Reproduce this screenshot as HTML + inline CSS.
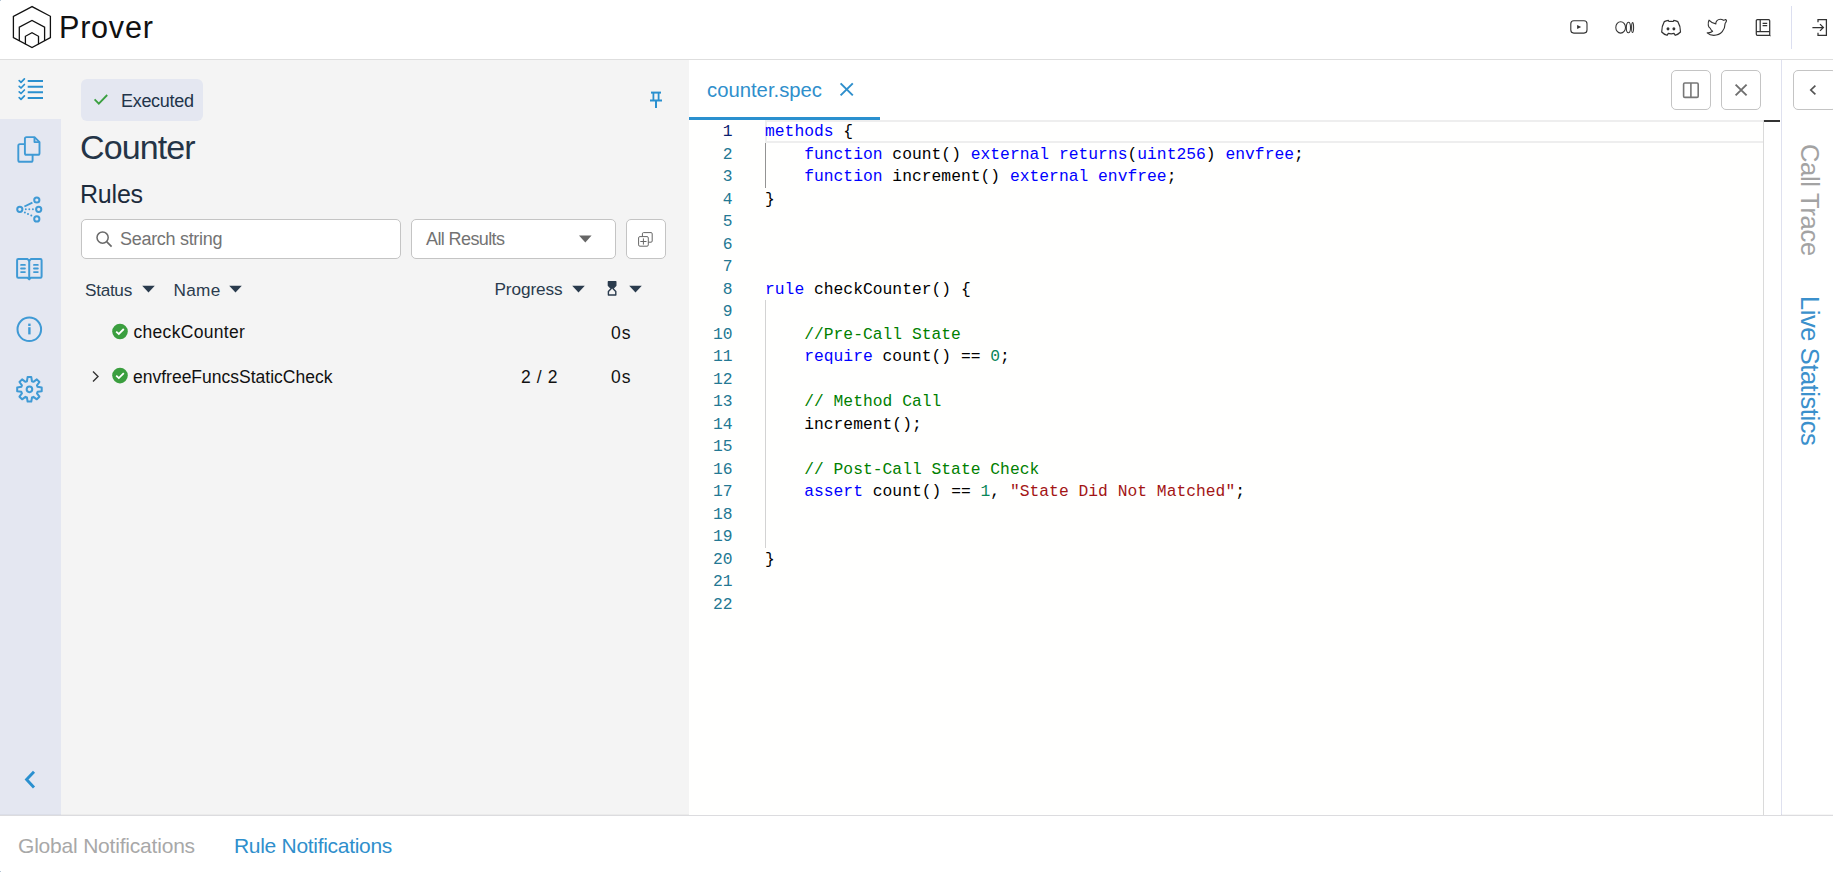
<!DOCTYPE html>
<html><head><meta charset="utf-8">
<style>
*{box-sizing:border-box;margin:0;padding:0}
html,body{width:1833px;height:872px;overflow:hidden;background:#fff;font-family:"Liberation Sans",sans-serif;position:relative}
.a{position:absolute}
.t{position:absolute;white-space:pre;line-height:1}
svg{position:absolute;overflow:visible}
#header{left:0;top:0;width:1833px;height:60px;background:#fff;border-bottom:1px solid #dedede}
#nav{left:0;top:60px;width:61px;height:755px;background:#e4e7f1}
#navtop{left:0;top:60px;width:61px;height:59px;background:#f4f4f4}
#panel{left:61px;top:60px;width:628px;height:755px;background:#f4f4f4}
#editor{left:689px;top:60px;width:1093px;height:755px;background:#fff}
#rside{left:1781px;top:60px;width:52px;height:755px;background:#fff;border-left:1px solid #dfe1ef}
#bottom{left:0;top:815px;width:1833px;height:57px;background:#fff;border-top:1px solid #dcdcdf;box-shadow:0 -1px 0 rgba(0,0,0,0.035)}
.code{position:absolute;left:765px;font-family:"Liberation Mono",monospace;font-size:16.3px;letter-spacing:0.025px;line-height:22.5px;height:22.5px;white-space:pre;color:#000}
.ln{position:absolute;left:687.5px;width:45px;text-align:right;font-family:"Liberation Mono",monospace;font-size:16.3px;line-height:22.5px;height:22.5px;white-space:pre;color:#237893}
.k{color:#0000ff}.c{color:#008000}.n{color:#098658}.s{color:#a31515}
.btn{position:absolute;border:1px solid #c4c4c4;border-radius:5px;background:#fff}
</style></head><body>
<div id="header" class="a"></div>
<!-- logo -->
<svg width="64" height="60" style="left:0;top:0" viewBox="0 0 64 60">
<g fill="none" stroke="#111" stroke-width="1.3" stroke-linejoin="miter">
<polygon points="32,6.6 13.4,16.3 13.4,37.6 32,47.6 50.4,37.6 50.4,16.3"/>
<polyline points="19.3,40.9 19.3,27.1 32,20.4 44.6,27.1 44.6,40.9"/>
<polyline points="25.4,44.2 25.4,36.3 32,32.8 38.5,36.3 38.5,44.2"/>
</g></svg>
<div class="t" style="left:59px;top:12px;font-size:30.6px;color:#111;letter-spacing:0.75px">Prover</div>

<!-- header icons -->
<svg width="20" height="20" style="left:1569px;top:17px" viewBox="0 0 20 20">
<rect x="1.8" y="3.8" width="16.2" height="12.3" rx="3" fill="none" stroke="#333" stroke-width="1.1"/>
<path d="M8.1 8 L12.2 9.95 L8.1 11.9Z" fill="#333"/></svg>
<svg width="22" height="20" style="left:1614px;top:17px" viewBox="0 0 22 20">
<g fill="none" stroke="#333" stroke-width="1.05"><ellipse cx="6.65" cy="10.45" rx="4.85" ry="5.65"/><ellipse cx="14.4" cy="10.45" rx="2.1" ry="5.3"/><ellipse cx="18.6" cy="10.45" rx="1.0" ry="5.0"/></g></svg>
<svg width="22" height="20" style="left:1660px;top:17px" viewBox="0 0 22 20">
<path d="M8.3 3.4 C6.8 3.6 5.5 4 4.3 4.6 C2.5 7.6 1.7 11 1.7 15 C3.2 16.7 5.2 17.7 7 18.3 L8.3 16.4 C10.2 16.9 12.1 16.9 14 16.4 L15.3 18.3 C17.1 17.7 19 16.7 20.5 15 C20.5 11 19.7 7.6 17.8 4.6 C16.6 4 15.3 3.6 13.8 3.4 L13.2 4.5 C11.8 4.3 10.4 4.3 9 4.5Z" fill="none" stroke="#333" stroke-width="1.2" stroke-linejoin="round"/>
<ellipse cx="8" cy="11.8" rx="1.45" ry="1.65" fill="#333"/><ellipse cx="13.9" cy="11.8" rx="1.45" ry="1.65" fill="#333"/></svg>
<svg width="22" height="20" style="left:1706px;top:17px" viewBox="0 0 22 20">
<path d="M3 3.2 C4.8 5.2 7.2 6.6 9.8 6.9 C9.6 4.2 11.7 2.2 14.3 2.2 C15.6 2.2 16.8 2.8 17.6 3.3 C18.4 3.2 19.1 2.9 19.7 2.5 C20.4 3 20.6 4 20.3 4.6 C19.9 5.4 19.3 5.9 19.1 6.6 C19.1 12.5 15.3 18.3 7.8 18.3 C5.3 18.3 2.9 17.4 1.2 15.8 C3.2 16 5.3 15.4 6.6 14.3 C5.5 13.6 4.7 12.6 4.3 11.4 C3.2 10.6 2.4 9.4 2.3 8.2 C2.1 6.3 2.3 4.5 3 3.2Z" fill="none" stroke="#333" stroke-width="1.15" stroke-linejoin="round"/></svg>
<svg width="20" height="20" style="left:1753px;top:17px" viewBox="0 0 20 20">
<g fill="none" stroke="#333" stroke-width="1.25" stroke-linejoin="round"><path d="M3.3 17 V3.8 Q3.3 2.7 4.4 2.7 H15.6 Q16.7 2.7 16.7 3.8 V18.3 H4.4 Q3.3 18.3 3.3 17Z"/><path d="M3.3 14.6 H16.7"/><path d="M7.2 2.7 V14.6"/><path d="M9.6 6.4 H14.2 M9.6 8.5 H14.2"/><path d="M16.7 18.3 L17.6 18.9" stroke-width="1"/></g></svg>
<div class="a" style="left:1791px;top:6px;width:1px;height:43px;background:#dcdff0"></div>
<svg width="20" height="20" style="left:1810px;top:17px" viewBox="0 0 20 20">
<g fill="none" stroke="#333" stroke-width="1.25"><path d="M8 5.2 V2.7 H16.4 V18.3 H8 V15.8"/><path d="M2.4 10.5 H13.4 M10 7.1 L13.4 10.5 L10 13.9"/></g></svg>

<div id="nav" class="a"></div>
<div id="navtop" class="a"></div>
<div id="panel" class="a"></div>
<div id="editor" class="a"></div>
<div id="rside" class="a"></div>
<div id="bottom" class="a"></div>

<!-- nav icons -->
<svg width="40" height="40" style="left:10px;top:70px" viewBox="0 0 40 40">
<g fill="none" stroke="#2a90cf" stroke-width="2">
<path d="M17.7 11 H33 M17.7 16.7 H33 M17.7 22.2 H33 M17.7 28 H33"/>
<g stroke-width="1.7" stroke-linecap="round" stroke-linejoin="round">
<path d="M9.2 10.6 L11 12.3 L14.4 8.8"/><path d="M9.2 16.3 L11 18 L14.4 14.5"/><path d="M9.2 21.8 L11 23.5 L14.4 20"/><path d="M9.2 27.6 L11 29.3 L14.4 25.8"/></g></g></svg>
<svg width="40" height="40" style="left:10px;top:130px" viewBox="0 0 40 40">
<g fill="none" stroke="#3f9ad5" stroke-width="1.9" stroke-linejoin="round">
<path d="M14.9 14.1 H9.9 Q8.3 14.1 8.3 15.7 V30.2 Q8.3 31.8 9.9 31.8 H21 Q22.6 31.8 22.6 30.2 V24.8"/>
<path d="M16.5 7.1 H24.5 L29.5 12.1 V23.2 Q29.5 24.8 27.9 24.8 H16.5 Q14.9 24.8 14.9 23.2 V8.7 Q14.9 7.1 16.5 7.1Z"/>
<path d="M24.5 7.3 V12.1 H29.3"/>
</g></svg>
<svg width="40" height="40" style="left:10px;top:190px" viewBox="0 0 40 40">
<g fill="none" stroke="#3f9ad5" stroke-width="2">
<circle cx="9.8" cy="19.3" r="2.6"/><circle cx="26.8" cy="10" r="2.6"/><circle cx="28.7" cy="19.3" r="2.6"/><circle cx="26.8" cy="28.9" r="2.6"/>
<path d="M14.4 16.5 L22.4 12.6" stroke-width="1.9"/></g>
<g fill="#3f9ad5"><circle cx="15.8" cy="19.3" r="0.95"/><circle cx="19.3" cy="19.3" r="0.95"/><circle cx="22.9" cy="19.3" r="0.95"/>
<circle cx="14.9" cy="22.5" r="1"/><circle cx="18" cy="24" r="1"/><circle cx="21.3" cy="25.6" r="1"/></g></svg>
<svg width="40" height="40" style="left:10px;top:250px" viewBox="0 0 40 40">
<g fill="none" stroke="#3f9ad5" stroke-width="2" stroke-linejoin="round">
<path d="M8.3 9.1 H17.6 L19.2 10.9 L20.8 9.1 H30.4 Q31.6 9.1 31.6 10.3 V26.6 Q31.6 27.8 30.4 27.8 H20.8 L19.2 29.4 L17.6 27.8 H8.3 Q7.1 27.8 7.1 26.6 V10.3 Q7.1 9.1 8.3 9.1Z"/>
<path d="M19.2 10.9 V28.2"/>
<path d="M11.1 14.9 H14.9 M11.1 18.5 H14.9 M11.1 22.1 H14.9 M24 14.9 H27.8 M24 18.5 H27.8 M24 22.1 H27.8" stroke-linecap="round" stroke-width="1.9"/>
</g></svg>
<svg width="40" height="40" style="left:10px;top:310px" viewBox="0 0 40 40">
<circle cx="19.3" cy="19.3" r="11.8" fill="none" stroke="#3f9ad5" stroke-width="2"/>
<rect x="18.2" y="17.2" width="2.4" height="7.2" fill="#3f9ad5"/><rect x="18.2" y="13.6" width="2.4" height="2.4" fill="#3f9ad5"/></svg>
<svg width="40" height="40" style="left:10px;top:370px" viewBox="0 0 40 40">
<g fill="none" stroke="#3f9ad5" stroke-width="2" stroke-linejoin="round">
<path id="gear" d="M16.94 11.23 L17.60 7.09 L21.30 7.09 L21.96 11.23 L23.42 11.83 L26.81 9.37 L29.43 11.99 L26.97 15.38 L27.57 16.84 L31.71 17.50 L31.71 21.20 L27.57 21.86 L26.97 23.32 L29.43 26.71 L26.81 29.33 L23.42 26.87 L21.96 27.47 L21.30 31.61 L17.60 31.61 L16.94 27.47 L15.48 26.87 L12.09 29.33 L9.47 26.71 L11.93 23.32 L11.33 21.86 L7.19 21.20 L7.19 17.50 L11.33 16.84 L11.93 15.38 L9.47 11.99 L12.09 9.37 L15.48 11.83Z"/>
<circle cx="19.45" cy="19.35" r="2.8"/></g></svg>
<svg width="20" height="24" style="left:20px;top:768px" viewBox="0 0 20 24">
<path d="M14 3.8 L6.6 11.6 L14 19.4" fill="none" stroke="#2a90cf" stroke-width="2.9"/></svg>

<!-- panel content -->
<div class="a" style="left:81px;top:79px;width:122px;height:42px;background:#e4e7f1;border-radius:6px"></div>
<svg width="16" height="14" style="left:93px;top:93px" viewBox="0 0 16 14">
<path d="M1.6 6.4 L5.8 10.6 L14.2 2" fill="none" stroke="#3aa040" stroke-width="1.8"/></svg>
<div class="t" style="left:121px;top:92px;font-size:18px;color:#22344a;letter-spacing:-0.3px">Executed</div>
<svg width="16" height="20" style="left:648px;top:90px" viewBox="0 0 16 20">
<g fill="#2a90cf"><rect x="3" y="1.6" width="10" height="2"/><rect x="4.5" y="3" width="1.8" height="7"/><rect x="9.7" y="3" width="1.8" height="7"/><rect x="2" y="9.5" width="12" height="2"/><rect x="7" y="11" width="2" height="7"/></g></svg>

<div class="t" style="left:80px;top:130px;font-size:34px;color:#243447;letter-spacing:-0.9px">Counter</div>
<div class="t" style="left:80px;top:182px;font-size:25px;color:#1c2b3c;letter-spacing:-0.2px">Rules</div>

<div class="btn" style="left:81px;top:219px;width:320px;height:40px"></div>
<svg width="20" height="20" style="left:94px;top:229px" viewBox="0 0 20 20">
<circle cx="8.6" cy="8.6" r="5.6" fill="none" stroke="#6a6a6a" stroke-width="1.5"/><path d="M12.6 12.6 L17.6 17.6" stroke="#6a6a6a" stroke-width="1.6"/></svg>
<div class="t" style="left:120px;top:230px;font-size:18px;color:#737373;letter-spacing:-0.3px">Search string</div>

<div class="btn" style="left:411px;top:219px;width:205px;height:40px"></div>
<div class="t" style="left:426px;top:230px;font-size:18px;color:#737373;letter-spacing:-0.6px">All Results</div>
<svg width="14" height="8" style="left:579px;top:235px" viewBox="0 0 14 8"><path d="M0 0.6 H12.6 L6.3 7.4Z" fill="#666"/></svg>

<div class="btn" style="left:626px;top:219px;width:40px;height:40px"></div>
<svg width="20" height="20" style="left:636px;top:230px" viewBox="0 0 20 20">
<g fill="none" stroke="#666" stroke-width="1"><path d="M6.4 6.6 V3.8 Q6.4 2.6 7.6 2.6 H15 Q16.2 2.6 16.2 3.8 V11 Q16.2 12.2 15 12.2 H12.3"/><rect x="2.6" y="6.6" width="9.7" height="9.6" rx="1.3"/><path d="M7.4 8.4 V14.6 M4.3 11.5 H10.5"/></g></svg>

<!-- table header -->
<div class="t" style="left:85px;top:282px;font-size:17.2px;color:#2a3b4d;letter-spacing:-0.3px">Status</div>
<svg width="14" height="8" style="left:142px;top:285px" viewBox="0 0 14 8"><path d="M0.2 0.7 H12.8 L6.5 7.5Z" fill="#2a3b4d"/></svg>
<div class="t" style="left:173.5px;top:282px;font-size:17.2px;color:#2a3b4d;letter-spacing:0.3px">Name</div>
<svg width="14" height="8" style="left:229px;top:285px" viewBox="0 0 14 8"><path d="M0.2 0.7 H12.8 L6.5 7.5Z" fill="#2a3b4d"/></svg>
<div class="t" style="left:494.5px;top:281px;font-size:17.2px;color:#2a3b4d;letter-spacing:-0.1px">Progress</div>
<svg width="14" height="8" style="left:572px;top:285px" viewBox="0 0 14 8"><path d="M0.2 0.7 H12.8 L6.5 7.5Z" fill="#2a3b4d"/></svg>
<svg width="12" height="16" style="left:606px;top:281px" viewBox="0 0 12 16">
<path d="M2.4 0.7 H9.8 V4.4 L6.9 7.4 L9.8 10.4 V14 H2.4 V10.4 L5.3 7.4 L2.4 4.4Z" fill="none" stroke="#2a3b4d" stroke-width="1.4" stroke-linejoin="round"/><path d="M2.4 0.7 H9.8 V4.4 L6.6 7.6 H5.6 L2.4 4.4Z" fill="#2a3b4d"/></svg>
<svg width="14" height="8" style="left:629px;top:285px" viewBox="0 0 14 8"><path d="M0.2 0.7 H12.8 L6.5 7.5Z" fill="#2a3b4d"/></svg>

<!-- rows -->
<svg width="18" height="18" style="left:111px;top:322px" viewBox="0 0 18 18"><circle cx="9" cy="9.5" r="7.8" fill="#3a9e3e"/><path d="M5.2 9.6 L7.8 12 L12.8 7" fill="none" stroke="#fff" stroke-width="1.8"/></svg>
<div class="t" style="left:133.5px;top:324px;font-size:17.5px;color:#111;letter-spacing:0.3px">checkCounter</div>
<div class="t" style="left:611px;top:325px;font-size:17.5px;color:#111;letter-spacing:1px">0s</div>

<svg width="10" height="14" style="left:90px;top:369px" viewBox="0 0 10 14"><path d="M3 2.4 L8 7.4 L3 12.4" fill="none" stroke="#333" stroke-width="1.4"/></svg>
<svg width="18" height="18" style="left:111px;top:366px" viewBox="0 0 18 18"><circle cx="9" cy="9.6" r="7.8" fill="#3a9e3e"/><path d="M5.2 9.7 L7.8 12.1 L12.8 7.1" fill="none" stroke="#fff" stroke-width="1.8"/></svg>
<div class="t" style="left:133px;top:369px;font-size:17.5px;color:#111">envfreeFuncsStaticCheck</div>
<div class="t" style="left:521px;top:369px;font-size:17.5px;color:#111;letter-spacing:0.6px">2 / 2</div>
<div class="t" style="left:611px;top:369px;font-size:17.5px;color:#111;letter-spacing:1px">0s</div>

<!-- editor tab -->
<div class="t" style="left:707px;top:80px;font-size:20.3px;color:#2f8fcc">counter.spec</div>
<svg width="16" height="16" style="left:839px;top:82px" viewBox="0 0 16 16"><path d="M1.6 1.4 L13.8 13.4 M13.8 1.4 L1.6 13.4" stroke="#2f8fcc" stroke-width="2"/></svg>
<div class="a" style="left:689px;top:117px;width:191px;height:3px;background:#2a90cf"></div>

<div class="btn" style="left:1671px;top:70px;width:40px;height:40px"></div>
<svg width="20" height="20" style="left:1681px;top:80px" viewBox="0 0 20 20"><g fill="none" stroke="#777" stroke-width="1.6"><rect x="2.6" y="3" width="14.6" height="14.4" rx="1.2"/><path d="M9.9 3 V17.4"/></g></svg>
<div class="btn" style="left:1721px;top:70px;width:40px;height:40px"></div>
<svg width="20" height="20" style="left:1731px;top:80px" viewBox="0 0 20 20"><path d="M4.6 4.6 L15.6 15.4 M15.6 4.6 L4.6 15.4" stroke="#6f6f6f" stroke-width="1.9"/></svg>
<div class="btn" style="left:1793px;top:70px;width:44px;height:40px"></div>
<svg width="12" height="14" style="left:1807px;top:83px" viewBox="0 0 12 14"><path d="M8.4 2.6 L3.8 7 L8.4 11.4" fill="none" stroke="#555" stroke-width="1.7"/></svg>

<!-- editor content -->
<div class="a" style="left:689px;top:120px;width:1074px;height:695px;background:#fffffe"></div>
<div class="a" style="left:765px;top:120px;width:1000px;height:23px;border:2px solid #eeeeee"></div>
<div class="a" style="left:1763px;top:120px;width:18px;height:695px;background:#fff;border-left:1px solid #dadada"></div>
<div class="a" style="left:1764px;top:120px;width:16px;height:2px;background:#333"></div>
<div class="a" style="left:765px;top:142.5px;width:1px;height:45px;background:#939393"></div>
<div class="a" style="left:765px;top:300px;width:1px;height:247.5px;background:#d3d3d3"></div>

<div id="lines">
<div class="ln" style="top:121.0px;color:#0b216f">1</div>
<div class="code" style="top:121.0px"><span class="k">methods</span> {</div>
<div class="ln" style="top:143.5px;">2</div>
<div class="code" style="top:143.5px">    <span class="k">function</span> count() <span class="k">external</span> <span class="k">returns</span>(<span class="k">uint256</span>) <span class="k">envfree</span>;</div>
<div class="ln" style="top:166.0px;">3</div>
<div class="code" style="top:166.0px">    <span class="k">function</span> increment() <span class="k">external</span> <span class="k">envfree</span>;</div>
<div class="ln" style="top:188.5px;">4</div>
<div class="code" style="top:188.5px">}</div>
<div class="ln" style="top:211.0px;">5</div>
<div class="ln" style="top:233.5px;">6</div>
<div class="ln" style="top:256.0px;">7</div>
<div class="ln" style="top:278.5px;">8</div>
<div class="code" style="top:278.5px"><span class="k">rule</span> checkCounter() {</div>
<div class="ln" style="top:301.0px;">9</div>
<div class="ln" style="top:323.5px;">10</div>
<div class="code" style="top:323.5px">    <span class="c">//Pre-Call State</span></div>
<div class="ln" style="top:346.0px;">11</div>
<div class="code" style="top:346.0px">    <span class="k">require</span> count() == <span class="n">0</span>;</div>
<div class="ln" style="top:368.5px;">12</div>
<div class="ln" style="top:391.0px;">13</div>
<div class="code" style="top:391.0px">    <span class="c">// Method Call</span></div>
<div class="ln" style="top:413.5px;">14</div>
<div class="code" style="top:413.5px">    increment();</div>
<div class="ln" style="top:436.0px;">15</div>
<div class="ln" style="top:458.5px;">16</div>
<div class="code" style="top:458.5px">    <span class="c">// Post-Call State Check</span></div>
<div class="ln" style="top:481.0px;">17</div>
<div class="code" style="top:481.0px">    <span class="k">assert</span> count() == <span class="n">1</span>, <span class="s">"State Did Not Matched"</span>;</div>
<div class="ln" style="top:503.5px;">18</div>
<div class="ln" style="top:526.0px;">19</div>
<div class="ln" style="top:548.5px;">20</div>
<div class="code" style="top:548.5px">}</div>
<div class="ln" style="top:571.0px;">21</div>
<div class="ln" style="top:593.5px;">22</div>
</div>

<div class="a" style="left:0;top:0;width:1px;height:1px;background:#b5c6d6"></div>
<div class="a" style="left:0;top:871px;width:1px;height:1px;background:#b5c6d6"></div>
<!-- right side labels -->
<div class="t" style="left:1788px;top:143.5px;font-size:25.5px;color:#a3a3a3;transform-origin:0 0;transform:translate(33.5px,0) rotate(90deg);letter-spacing:-0.3px">Call Trace</div>
<div class="t" style="left:1788px;top:296px;font-size:25.5px;color:#3b90cc;transform-origin:0 0;transform:translate(33.5px,0) rotate(90deg);letter-spacing:-0.44px">Live Statistics</div>

<!-- bottom -->
<div class="t" style="left:18px;top:835px;font-size:21px;color:#a8a8a8;letter-spacing:-0.2px">Global Notifications</div>
<div class="t" style="left:234px;top:835px;font-size:21px;color:#2f8fcc;letter-spacing:-0.3px">Rule Notifications</div>
</body></html>
